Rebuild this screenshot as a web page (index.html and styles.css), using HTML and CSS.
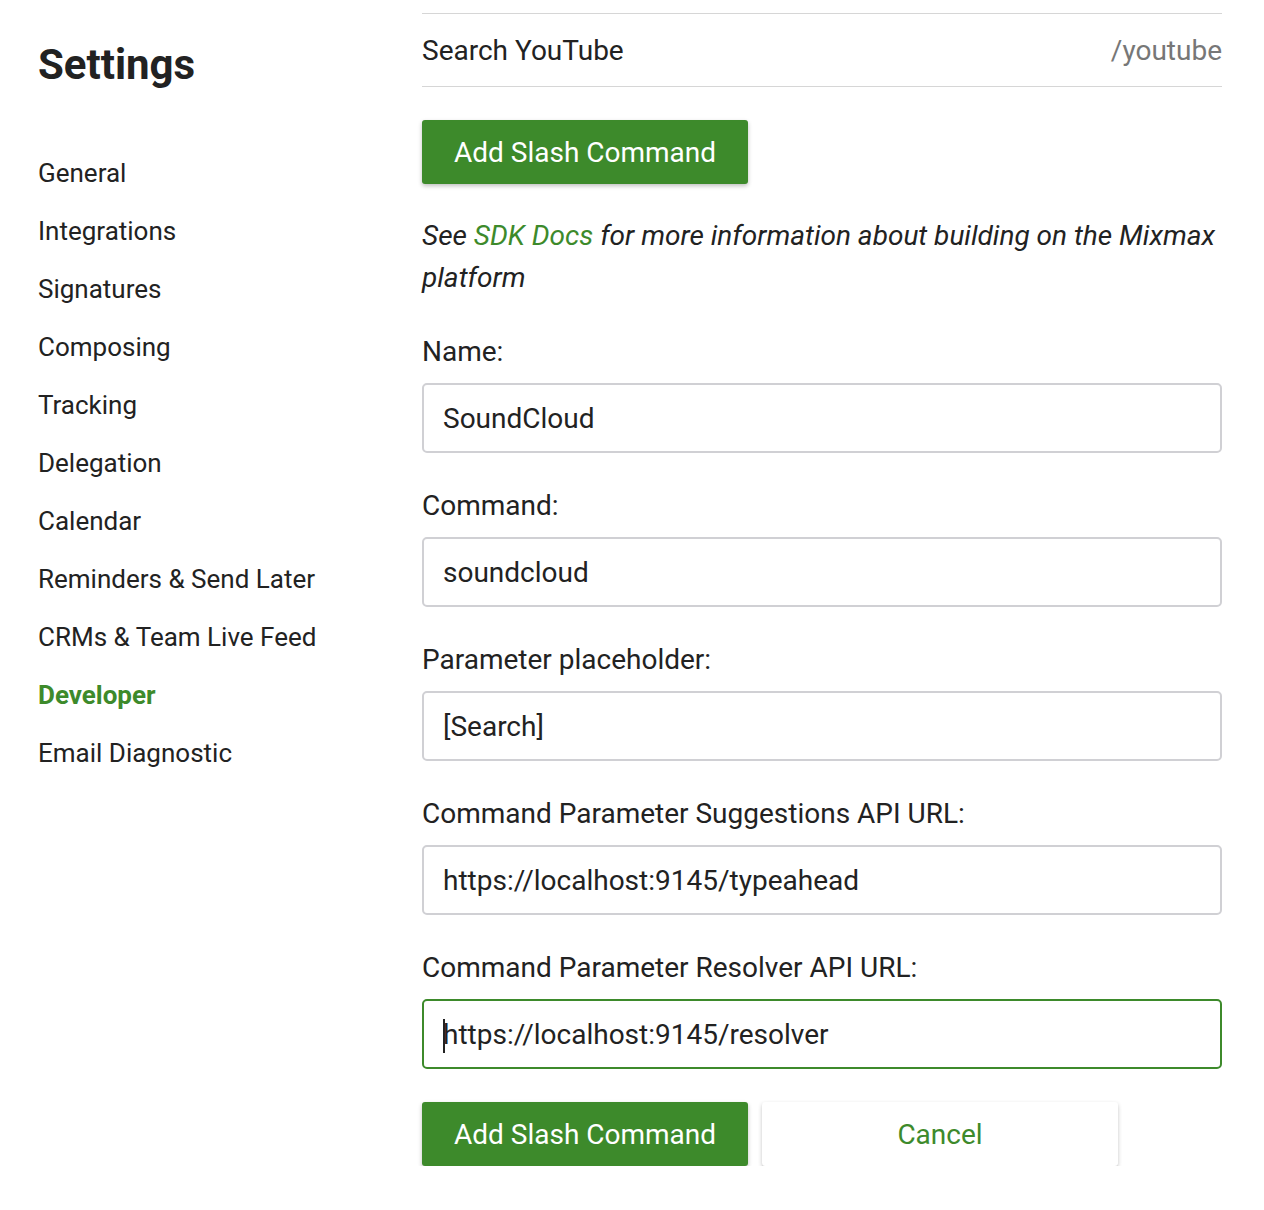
FILE: index.html
```html
<!DOCTYPE html>
<html>
<head>
<meta charset="utf-8">
<link rel="stylesheet" href="styles.css">
</head>
<body>
<div class="page">
  <aside class="sidebar">
    <h1 class="title">Settings</h1>
    <nav class="nav">
      <a class="nav-item">General</a>
      <a class="nav-item">Integrations</a>
      <a class="nav-item">Signatures</a>
      <a class="nav-item">Composing</a>
      <a class="nav-item">Tracking</a>
      <a class="nav-item">Delegation</a>
      <a class="nav-item">Calendar</a>
      <a class="nav-item">Reminders &amp; Send Later</a>
      <a class="nav-item">CRMs &amp; Team Live Feed</a>
      <a class="nav-item active">Developer</a>
      <a class="nav-item">Email Diagnostic</a>
    </nav>
  </aside>
  <main class="main">
    <div class="cmd-row">
      <span class="cmd-name">Search YouTube</span>
      <span class="cmd-slash">/youtube</span>
    </div>
    <button class="btn btn-primary btn-top">Add Slash Command</button>
    <p class="note">See <a class="link">SDK Docs</a> for more information about building on the Mixmax platform</p>
    <div class="field">
      <label class="label">Name:</label>
      <div class="input">SoundCloud</div>
    </div>
    <div class="field">
      <label class="label">Command:</label>
      <div class="input">soundcloud</div>
    </div>
    <div class="field">
      <label class="label">Parameter placeholder:</label>
      <div class="input">[Search]</div>
    </div>
    <div class="field">
      <label class="label">Command Parameter Suggestions API URL:</label>
      <div class="input">https://localhost:9145/typeahead</div>
    </div>
    <div class="field">
      <label class="label">Command Parameter Resolver API URL:</label>
      <div class="input focused"><span class="caret"></span>https://localhost:9145/resolver</div>
    </div>
    <div class="actions">
      <button class="btn btn-primary">Add Slash Command</button>
      <button class="btn btn-secondary">Cancel</button>
    </div>
  </main>
</div>
</body>
</html>
```

FILE: styles.css
```css
html, body {
  margin: 0;
  padding: 0;
  background: #fff;
}
body {
  font-family: Roboto, "Liberation Sans", sans-serif;
  color: #222;
}
.page {
  display: flex;
  padding-left: 38px;
}
.sidebar {
  width: 384px;
  flex: none;
}
.title {
  margin: 38px 0 0;
  font-size: 42px;
  line-height: 54px;
  font-weight: 700;
  color: #222;
}
.nav {
  display: flex;
  flex-direction: column;
  margin-top: 52px;
}
.nav-item {
  font-size: 26px;
  line-height: 58px;
  color: #222;
}
.nav-item.active {
  color: #3d8a2b;
  font-weight: 700;
}
.main {
  width: 800px;
  flex: none;
  padding-top: 13px;
  font-size: 28px;
}
.cmd-row {
  display: flex;
  justify-content: space-between;
  align-items: center;
  height: 72px;
  border-top: 1px solid #d6d6d6;
  border-bottom: 1px solid #d6d6d6;
}
.cmd-name { color: #222; }
.cmd-slash { color: #777; }
.btn {
  font-family: Roboto, "Liberation Sans", sans-serif;
  font-size: 28px;
  height: 64px;
  border: none;
  border-radius: 3px;
  padding: 0;
  cursor: pointer;
}
.btn-primary {
  width: 326px;
  background: #3d8a2b;
  color: #fff;
  box-shadow: 0 2px 4px rgba(0,0,0,0.25);
}
.btn-secondary {
  width: 356px;
  background: #fff;
  color: #3d8a2b;
  box-shadow: 0 1px 1px rgba(0,0,0,0.06), 0 2px 4px rgba(0,0,0,0.22);
}
.btn-top {
  display: block;
  margin-top: 33px;
}
.note {
  margin: 31px 0 0;
  font-style: italic;
  line-height: 42px;
}
.link { color: #3d8a2b; }
.field {
  margin-top: 32px;
}
.label {
  display: block;
  line-height: 42px;
  margin-bottom: 10px;
}
.input {
  box-sizing: border-box;
  height: 70px;
  border: 2px solid #d0d0d4;
  border-radius: 5px;
  padding: 0 19px;
  display: flex;
  align-items: center;
  position: relative;
}
.input.focused {
  border-color: #3d8a2b;
}
.caret {
  position: absolute;
  left: 19px;
  top: 18px;
  width: 2px;
  height: 34px;
  background: #222;
}
.actions {
  display: flex;
  gap: 14px;
  margin-top: 33px;
}
```
